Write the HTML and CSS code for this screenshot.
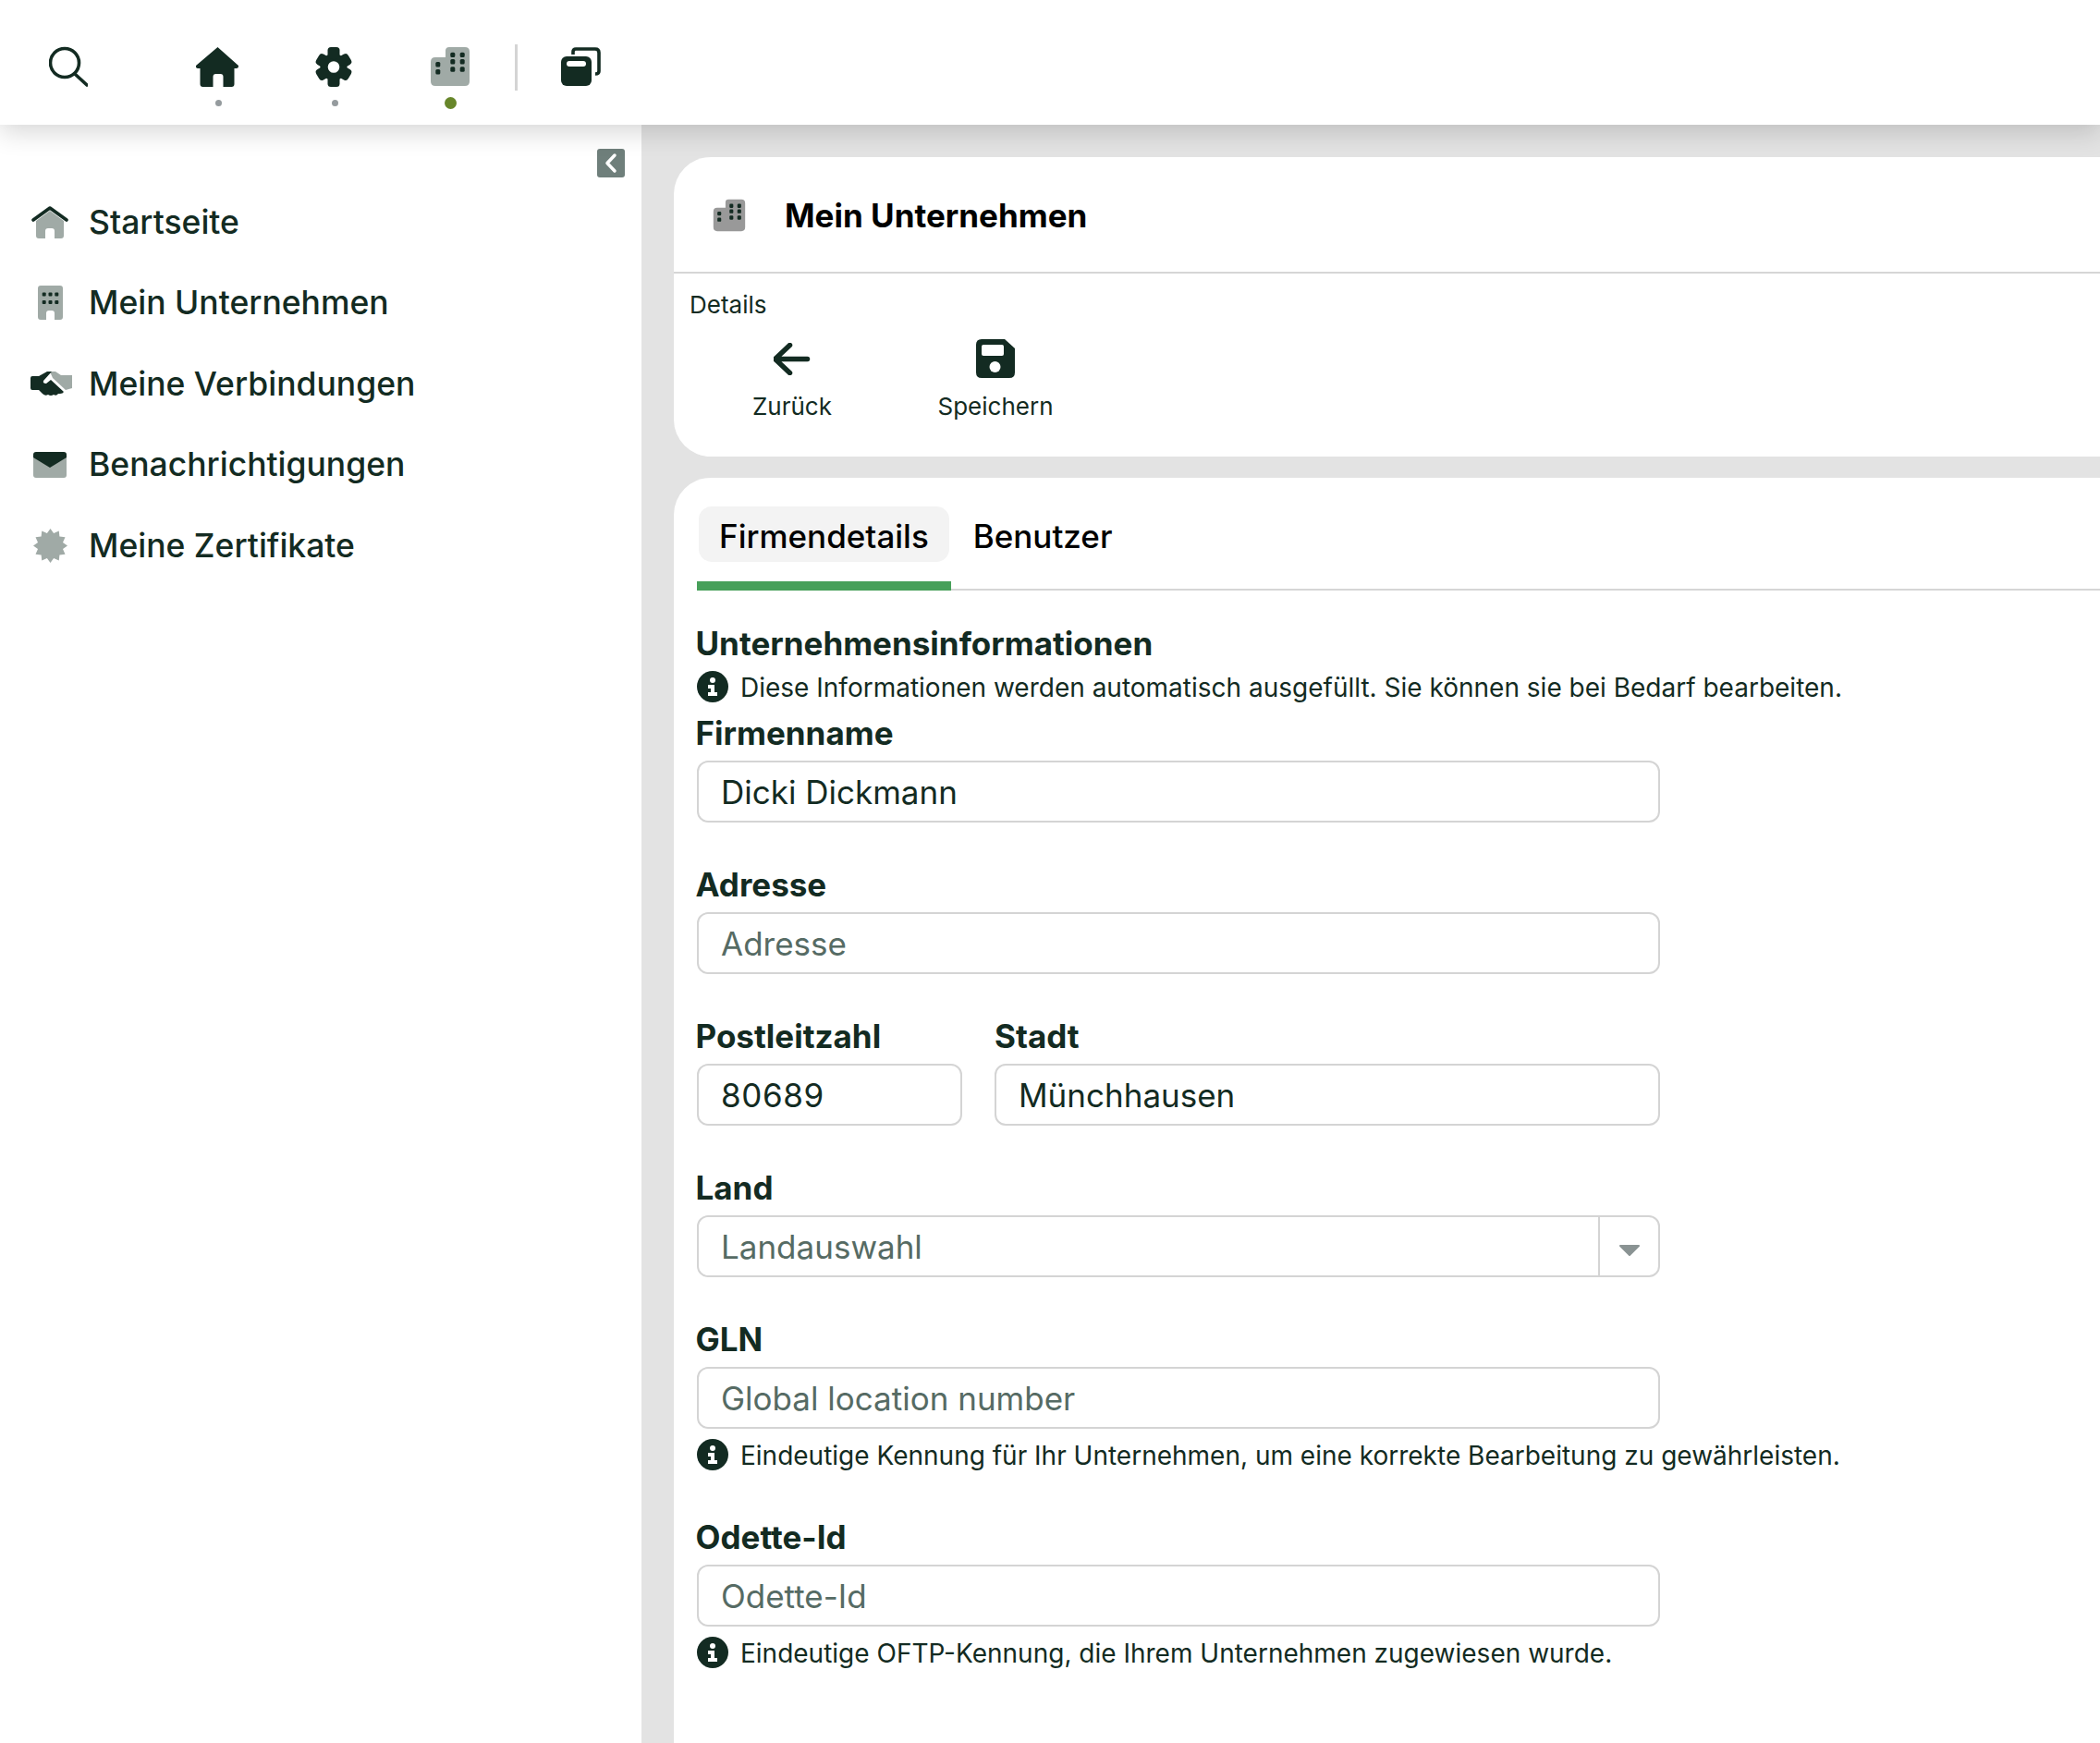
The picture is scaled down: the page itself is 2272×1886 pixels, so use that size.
FILE: index.html
```html
<!DOCTYPE html>
<html lang="de">
  <head>
    <meta charset="UTF-8" />
    <title>Mein Unternehmen</title>
    <link rel="stylesheet" href="styles.css">
  </head>
  <body>
    <svg class="defs" width="0" height="0">
      <symbol id="building" viewBox="0 0 42 44">
        <g transform="translate(0 1)">
          <path fill="currentColor" d="M20 0H37Q42 0 42 5V37Q42 42 37 42H5Q0 42 0 37V16Q0 11 5 11H16V4Q16 0 20 0Z" />
          <g fill="#132b22">
            <rect x="21.300" y="5.700" width="5" height="5.400" rx="1.500" /><rect x="31.700" y="5.700" width="5" height="5.400" rx="1.500" />
            <rect x="21.300" y="13" width="5" height="5.400" rx="1.500" /><rect x="31.700" y="13" width="5" height="5.400" rx="1.500" />
            <rect x="21.300" y="21.300" width="5" height="5.400" rx="1.500" /><rect x="31.700" y="21.300" width="5" height="5.400" rx="1.500" />
            <rect x="5.300" y="16" width="5" height="5.400" rx="1.500" /><rect x="5.300" y="24" width="5" height="5.400" rx="1.500" />
          </g>
        </g>
      </symbol>
      <symbol id="info" viewBox="0 0 34 34">
        <circle cx="17" cy="17" r="17" fill="#132b22" />
        <circle cx="17" cy="10" r="3" fill="#fff" />
        <path fill="#fff" d="M12 15H19V23H22V27H12V23H15V19H12Z" />
      </symbol>
    </svg>

    <header class="topbar">
      <button class="search-btn">
        <svg width="42" height="44" viewBox="0 0 42 44" fill="none" stroke="#132b22" stroke-width="3.600" stroke-linecap="round">
          <circle cx="17" cy="18" r="15.500" />
          <path d="M28 30L41 42" />
        </svg>
      </button>
      <div class="top-item">
        <svg width="47" height="44" viewBox="0.500 0 47 44" fill="#132b22">
          <path d="M24 1L46.500 21Q47 24 44 24H42V41Q42 44 39 44H30V33Q30 30 27 30H22Q19 30 19 33V44H8Q5 44 5 41V24H3Q0 24 .5 21Z" />
        </svg>
        <span class="dot"></span>
      </div>
      <div class="top-item">
        <svg width="42" height="44" viewBox="0 0 42 44">
          <g fill="#132b22">
            <circle cx="21" cy="22.500" r="14.500" />
            <rect x="14.500" y="1" width="13" height="43" rx="3.500" />
            <rect x="14.500" y="2.500" width="13" height="40" rx="3.500" transform="rotate(60 21 22.500)" />
            <rect x="14.500" y="2.500" width="13" height="40" rx="3.500" transform="rotate(120 21 22.500)" />
          </g>
          <circle cx="21" cy="22.500" r="6.300" fill="#fff" />
        </svg>
        <span class="dot"></span>
      </div>
      <div class="top-item">
        <svg class="light" width="42" height="44"><use href="#building" /></svg>
        <span class="dot active"></span>
      </div>
      <span class="top-sep"></span>
      <button class="cards-btn">
        <svg width="43" height="44" viewBox="0 0 43 44">
          <path d="M13 9V6Q13 3 16 3H37Q41 3 41 7V27Q41 30 37 30" fill="none" stroke="#132b22" stroke-width="3.600" />
          <rect x="0" y="11" width="33" height="32" rx="6" fill="#132b22" />
          <rect x="6" y="16" width="21" height="6" rx="3" fill="#fff" />
        </svg>
      </button>
    </header>

    <div class="layout">
      <aside class="sidebar">
        <div class="collapse-row">
          <button class="collapse-btn">
            <svg width="30" height="31" viewBox="0 0 30 31" fill="none" stroke="#fff" stroke-width="3.500" stroke-linecap="round" stroke-linejoin="round">
              <path d="M19 7L11 15.500L19 24" />
            </svg>
          </button>
        </div>
        <nav>
          <a class="nav-item">
            <span class="nav-icon">
              <svg width="40" height="35" viewBox="0 0 40 35">
                <path fill="#a0aaa6" d="M20 5L35 16V32Q35 35 32 35H25V27Q25 24 22 24H18Q15 24 15 27V35H8Q5 35 5 32V16Z" />
                <path fill="none" stroke="#132b22" stroke-width="3.600" stroke-linecap="round" stroke-linejoin="round" d="M2 15L20 2L38 15" />
              </svg>
            </span>
            Startseite
          </a>
          <a class="nav-item">
            <span class="nav-icon">
              <svg width="27" height="37" viewBox="0 0 27 37">
                <path fill="#a0aaa6" d="M3 0H24Q27 0 27 3V34Q27 37 24 37H18V30Q18 27 15 27H12Q9 27 9 30V37H3Q0 37 0 34V3Q0 0 3 0Z" />
                <g fill="#132b22">
                  <rect x="4.700" y="7.500" width="4" height="4" rx="1" /><rect x="11.500" y="7.500" width="4" height="4" rx="1" /><rect x="18.300" y="7.500" width="4" height="4" rx="1" />
                  <rect x="4.700" y="16" width="4" height="4" rx="1" /><rect x="11.500" y="16" width="4" height="4" rx="1" /><rect x="18.300" y="16" width="4" height="4" rx="1" />
                </g>
              </svg>
            </span>
            Mein Unternehmen
          </a>
          <a class="nav-item">
            <span class="nav-icon">
              <svg width="48" height="27" viewBox="-3 0 48 27">
                <path fill="#a0aaa6" d="M21 0H27L33 4H45V18L38 20L24 7Z" />
                <path fill="#132b22" d="M2 5H9L18 0H23L14 10Q13 13 17 13L22 9L36 22Q35 24 32 24H30Q28 27 25 25Q22 27 19 25Q16 27 13 24L9 20H2Q0 20 0 18V7Q0 5 2 5Z" />
              </svg>
            </span>
            Meine Verbindungen
          </a>
          <a class="nav-item">
            <span class="nav-icon">
              <svg width="36" height="28" viewBox="0 0 36 28">
                <path fill="#a0aaa6" d="M0 6H36V25Q36 28 33 28H3Q0 28 0 25Z" />
                <path fill="#132b22" d="M3 0H33Q36 0 36 3V6L18 17L0 6V3Q0 0 3 0Z" />
              </svg>
            </span>
            Benachrichtigungen
          </a>
          <a class="nav-item">
            <span class="nav-icon">
              <svg width="37" height="37" viewBox="-18.500 -18.500 37 37">
                <polygon fill="#a0aaa6" points="18.500,0 13.500,3.600 16,9.250 9.900,9.900 9.250,16 3.600,13.500 0,18.500 -3.600,13.500 -9.250,16 -9.900,9.900 -16,9.250 -13.500,3.600 -18.500,0 -13.500,-3.600 -16,-9.250 -9.900,-9.900 -9.250,-16 -3.600,-13.500 0,-18.500 3.600,-13.500 9.250,-16 9.900,-9.900 16,-9.250 13.500,-3.600" />
              </svg>
            </span>
            Meine Zertifikate
          </a>
        </nav>
      </aside>

      <main class="content">
        <section class="card head-card">
          <div class="card-title">
            <svg class="gray" width="36" height="36"><use href="#building" /></svg>
            <h1>Mein Unternehmen</h1>
          </div>
          <div class="toolbar">
            <div class="toolbar-label">Details</div>
            <div class="toolbar-btns">
              <button class="tool-btn">
                <span class="tool-icon">
                  <svg width="41" height="35" viewBox="1.500 0 41 35" fill="none" stroke="#132b22" stroke-width="5.500" stroke-linecap="round" stroke-linejoin="round">
                    <path d="M38 17.500H3M19 2.500L3 17.500L19 32.500" />
                  </svg>
                </span>
                Zurück
              </button>
              <button class="tool-btn">
                <span class="tool-icon">
                  <svg width="42" height="42" viewBox="0 0 42 42">
                    <path fill="#132b22" d="M6 0H31L42 10V36Q42 42 36 42H6Q0 42 0 36V6Q0 0 6 0Z" />
                    <rect x="6" y="6" width="24" height="12" rx="2" fill="#fff" />
                    <circle cx="20.500" cy="30" r="6" fill="#fff" />
                  </svg>
                </span>
                Speichern
              </button>
            </div>
          </div>
        </section>

        <section class="card form-card">
          <div class="tabs">
            <div class="tab active"><span class="tab-label">Firmendetails</span></div>
            <div class="tab"><span class="tab-label">Benutzer</span></div>
          </div>

          <form class="company-form">
            <h2>Unternehmensinformationen</h2>
            <div class="hint first-hint">
              <svg width="34" height="34"><use href="#info" /></svg>
              <span>Diese Informationen werden automatisch ausgefüllt. Sie können sie bei Bedarf bearbeiten.</span>
            </div>

            <div class="field">
              <label for="firma">Firmenname</label>
              <input type="text" id="firma" value="Dicki Dickmann" />
            </div>
            <div class="field">
              <label for="adresse">Adresse</label>
              <input type="text" id="adresse" placeholder="Adresse" />
            </div>
            <div class="field-row">
              <div class="field plz">
                <label for="plz">Postleitzahl</label>
                <input type="text" id="plz" value="80689" />
              </div>
              <div class="field city">
                <label for="stadt">Stadt</label>
                <input type="text" id="stadt" value="Münchhausen" />
              </div>
            </div>
            <div class="field">
              <label for="land">Land</label>
              <div class="select-box">
                <input type="text" id="land" placeholder="Landauswahl" />
                <span class="select-arrow">
                  <svg width="24" height="14" viewBox="0 0 24 14">
                    <path fill="#8a9393" stroke="#8a9393" stroke-width="2" stroke-linejoin="round" d="M2 2H22L12 12Z" />
                  </svg>
                </span>
              </div>
            </div>
            <div class="field with-hint">
              <label for="gln">GLN</label>
              <input type="text" id="gln" placeholder="Global location number" />
              <div class="hint">
                <svg width="34" height="34"><use href="#info" /></svg>
                <span>Eindeutige Kennung für Ihr Unternehmen, um eine korrekte Bearbeitung zu gewährleisten.</span>
              </div>
            </div>
            <div class="field with-hint">
              <label for="odette">Odette-Id</label>
              <input type="text" id="odette" placeholder="Odette-Id" />
              <div class="hint">
                <svg width="34" height="34"><use href="#info" /></svg>
                <span>Eindeutige OFTP-Kennung, die Ihrem Unternehmen zugewiesen wurde.</span>
              </div>
            </div>
          </form>
        </section>
      </main>
    </div>
  </body>
</html>
```

FILE: styles.css
```css
html, body {
  height: 100%;
  overflow: hidden;
}
body {
  margin: 0;
  display: flex;
  flex-direction: column;
  background-color: #e3e3e3;
  color: #132b22;
  font-family: Inter, "Liberation Sans", sans-serif;
}
button {
  background: none;
  border: none;
  padding: 0;
  font: inherit;
  color: inherit;
  cursor: pointer;
}
svg {
  display: block;
  flex: none;
}
.defs {
  position: absolute;
}
.light {
  color: #a0aaa6;
}
.gray {
  color: #999;
}

/* top bar */
.topbar {
  flex: none;
  height: 135px;
  box-sizing: border-box;
  padding: 50px 0 0 53px;
  display: flex;
  align-items: flex-start;
  background-color: #fff;
  box-shadow: 0 8px 26px rgba(0, 0, 0, 0.16);
  position: relative;
  z-index: 2;
}
.search-btn {
  margin-right: 77px;
}
.top-item {
  width: 126px;
  display: flex;
  flex-direction: column;
  align-items: center;
}
.dot {
  width: 7px;
  height: 7px;
  margin: 14px 0 0 2px;
  border-radius: 50%;
  background-color: #959b9e;
}
.dot.active {
  width: 13px;
  height: 13px;
  margin: 11px 0 0 1px;
  background-color: #67862a;
}
.top-sep {
  width: 3px;
  height: 50px;
  margin: -2px 0 0 7px;
  background-color: #d4d4d4;
}
.cards-btn {
  margin-left: 47px;
}

/* page */
.layout {
  flex: 1;
  min-height: 0;
  display: flex;
}
.sidebar {
  width: 694px;
  flex: none;
  box-sizing: border-box;
  padding-top: 26px;
  background-color: #fff;
}
.collapse-row {
  display: flex;
  justify-content: flex-end;
  padding-right: 18px;
  margin-bottom: 4.4px;
}
.collapse-btn {
  width: 30px;
  height: 31px;
  border-radius: 3px;
  background-color: #6f7f7b;
}
.nav-item {
  height: 87.6px;
  padding-left: 31px;
  display: flex;
  align-items: center;
  font-size: 35.5px;
  font-weight: 500;
}
.nav-icon {
  width: 46px;
  margin-right: 19px;
  display: flex;
  justify-content: center;
}

/* cards */
.content {
  flex: 1;
  min-width: 0;
  padding: 35px 0 0 35px;
  display: flex;
  flex-direction: column;
  gap: 23px;
}
.card {
  background-color: #fff;
  border-radius: 40px 0 0 40px;
}
.head-card {
  height: 324px;
  flex: none;
}
.card-title {
  height: 122px;
  padding: 2px 0 0 42px;
  display: flex;
  align-items: center;
  gap: 42px;
  border-bottom: 2px solid #d6d6d6;
}
h1 {
  margin: 0;
  color: #000;
  font-size: 35px;
  font-weight: 700;
}
.toolbar {
  padding: 19px 0 0 17px;
}
.toolbar-label {
  font-size: 26px;
  line-height: 30px;
}
.toolbar-btns {
  display: flex;
  margin: 22px 0 0 1px;
}
.tool-btn {
  width: 220px;
  font-size: 26px;
  line-height: 30px;
  text-align: center;
}
.tool-icon {
  height: 42px;
  margin-bottom: 16px;
  display: flex;
  align-items: center;
  justify-content: center;
}

/* tabs */
.form-card {
  flex: 1;
  padding: 31px 0 0 25px;
  border-bottom-left-radius: 0;
}
.tabs {
  display: flex;
  border-bottom: 2px solid #d6d6d6;
}
.tab {
  padding: 0 2px 21px;
  margin-bottom: -2px;
  border-bottom: 10px solid transparent;
  color: #000;
  font-size: 35px;
  font-weight: 500;
}
.tab.active {
  border-bottom-color: #47a05a;
}
.tab-label {
  display: block;
  height: 60px;
  line-height: 65px;
  padding: 0 22px;
  border-radius: 14px;
}
.tab.active .tab-label {
  background-color: #f3f3f3;
}

/* form */
.company-form {
  width: 1042px;
}
h2 {
  margin: 37px 0 10px -1.5px;
  font-size: 35px;
  line-height: 40px;
  font-weight: 700;
}
.hint {
  display: flex;
  align-items: center;
  gap: 13px;
  height: 34px;
  font-size: 28px;
  white-space: nowrap;
}
.hint span {
  padding-top: 2px;
}
.first-hint {
  margin-bottom: 13px;
}
.field {
  margin-bottom: 47px;
}
.field.with-hint {
  margin-bottom: 52px;
}
.field.with-hint .hint {
  margin-top: 11px;
}
label {
  display: block;
  height: 40px;
  margin: 0 0 10px -1.5px;
  font-size: 35px;
  line-height: 40px;
  font-weight: 700;
}
.city label {
  margin-left: 0;
}
input {
  display: block;
  width: 100%;
  height: 67px;
  box-sizing: border-box;
  padding: 0 24px;
  border: 2px solid #d4d4d4;
  border-radius: 12px;
  background-color: #fff;
  color: #132b22;
  font-family: inherit;
  font-size: 35px;
  outline: none;
}
input::placeholder {
  color: #566b64;
  opacity: 1;
}
#plz {
  letter-spacing: 0.6px;
}
.field-row {
  display: flex;
  gap: 35px;
}
.plz {
  width: 287px;
}
.city {
  flex: 1;
}
.select-box {
  display: flex;
  height: 67px;
  box-sizing: border-box;
  border: 2px solid #d4d4d4;
  border-radius: 12px;
}
.select-box input {
  flex: 1;
  min-width: 0;
  height: 63px;
  border: none;
}
.select-arrow {
  width: 65px;
  flex: none;
  padding-top: 29px;
  box-sizing: border-box;
  border-left: 2px solid #d4d4d4;
  display: flex;
  justify-content: center;
}
```
